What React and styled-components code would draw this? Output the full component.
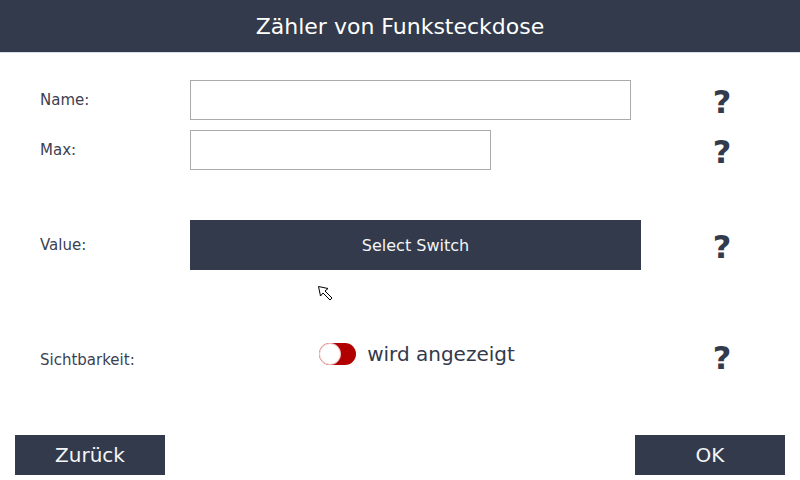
import React from "react";
import styled, { createGlobalStyle } from "styled-components";

const GlobalStyle = createGlobalStyle`
  html, body {
    margin: 0;
    padding: 0;
    background: white;
    font-family: "DejaVu Sans", "Liberation Sans", sans-serif;
  }
  * {
    box-sizing: border-box;
  }
`;

const Page = styled.div`
  position: relative;
  width: 800px;
  height: 480px;
  display: flex;
  flex-direction: column;
  overflow: hidden;
`;

const Header = styled.header`
  height: 53px;
  background-color: #323a4b;
  border-bottom: 1px solid #d6dde9;
  color: white;
  font-size: 22px;
  display: flex;
  align-items: center;
  justify-content: center;
`;

const Form = styled.div`
  flex: 1;
  display: flex;
  flex-direction: column;
  padding: 27px 0 0 40px;
`;

const Row = styled.div`
  display: grid;
  grid-template-columns: 150px 500px 64px;
  align-items: center;
  height: ${(p) => p.h}px;
  margin-top: ${(p) => p.top || 0}px;
`;

const Label = styled.div`
  font-size: 15px;
  color: #3b4152;
  padding-top: ${(p) => p.shift || 0}px;
`;

const TextInput = styled.input`
  width: ${(p) => p.w}px;
  height: 40px;
  border: 1px solid #a9aaab;
  background: white;
  outline: none;
  font-family: inherit;
  font-size: 15px;
  padding: 0 8px;
`;

const DarkButton = styled.button`
  width: ${(p) => p.w}px;
  height: ${(p) => p.h}px;
  background-color: #323a4b;
  color: #f4f5f7;
  border: none;
  font-family: "DejaVu Sans", sans-serif;
  font-size: ${(p) => p.size}px;
  padding: 0;
  cursor: pointer;
`;

const Help = styled.div`
  text-align: center;
  font-size: 32px;
  font-weight: bold;
  color: #323a4b;
  line-height: 1;
  padding-top: 4px;
`;

const ToggleField = styled.div`
  width: 451px;
  display: flex;
  align-items: center;
  justify-content: center;
  gap: 11px;
  padding-left: 3px;
  margin-top: -4px;
`;

const Track = styled.div`
  position: relative;
  width: 37px;
  height: 22px;
  border-radius: 11px;
  background-color: #b00000;
`;

const Knob = styled.div`
  position: absolute;
  left: 1px;
  top: 1px;
  width: 20px;
  height: 20px;
  border-radius: 50%;
  background: white;
  box-shadow: 0 0 0 1px #f1c6c6;
`;

const ToggleText = styled.span`
  font-size: 20px;
  color: #323a4b;
`;

const Footer = styled.div`
  display: flex;
  justify-content: space-between;
  padding: 0 15px 5px 15px;
`;

const Pointer = styled.svg`
  position: absolute;
  left: 317px;
  top: 285px;
`;

export default function App() {
  return (
    <Page>
      <GlobalStyle />
      <Header>Zähler von Funksteckdose</Header>
      <Form>
        <Row h={40}>
          <Label>Name:</Label>
          <TextInput w={441} />
          <Help>?</Help>
        </Row>
        <Row h={40} top={10}>
          <Label>Max:</Label>
          <TextInput w={301} />
          <Help>?</Help>
        </Row>
        <Row h={50} top={50}>
          <Label>Value:</Label>
          <DarkButton w={451} h={50} size={16}>Select Switch</DarkButton>
          <Help>?</Help>
        </Row>
        <Row h={32} top={68}>
          <Label shift={8}>Sichtbarkeit:</Label>
          <ToggleField>
            <Track>
              <Knob />
            </Track>
            <ToggleText>wird angezeigt</ToggleText>
          </ToggleField>
          <Help>?</Help>
        </Row>
      </Form>
      <Footer>
        <DarkButton w={150} h={40} size={20}>Zurück</DarkButton>
        <DarkButton w={150} h={40} size={20}>OK</DarkButton>
      </Footer>
      <Pointer width="18" height="18" viewBox="0 0 18 18">
        <path d="M1.5 1.5 L11 3.5 L8 6 L15 13 L13 15 L6 8 L3.5 11 Z" fill="white" stroke="black" strokeWidth="1" strokeLinejoin="miter" />
      </Pointer>
    </Page>
  );
}
